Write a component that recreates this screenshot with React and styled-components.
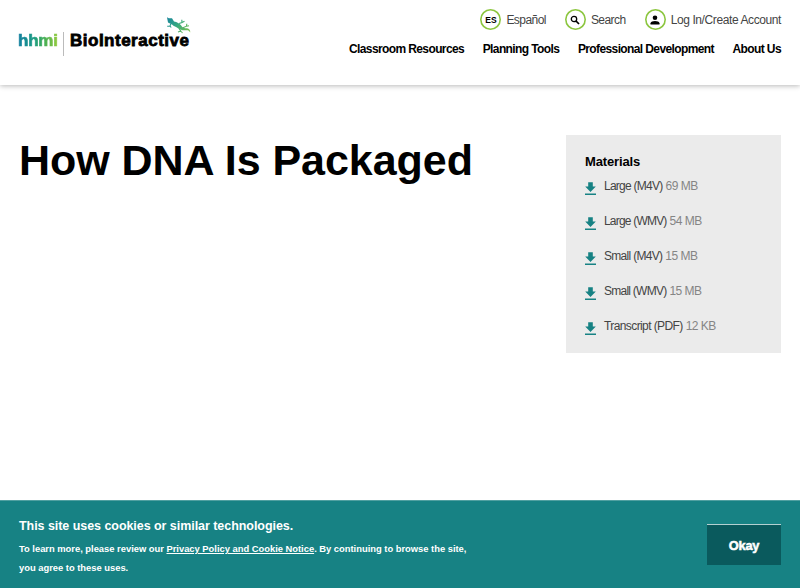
import styled, { createGlobalStyle } from 'styled-components';

const GlobalStyle = createGlobalStyle`
    * {
        box-sizing: border-box;
    }

    body {
        margin: 0;
        background: #fff;
        color: #000;
        font-family: 'Liberation Sans', Arial, sans-serif;
    }
`;

const Page = styled.div`
    display: flex;
    flex-direction: column;
    height: 588px;
    overflow: hidden;
`;

const Header = styled.header`
    display: flex;
    justify-content: space-between;
    height: 85px;
    padding: 0 19px 0 18px;
    flex: none;
    box-shadow: 0 1px 5px rgba(0, 0, 0, 0.28);
`;

const Logo = styled.a`
    position: relative;
    display: flex;
    align-items: flex-start;
    padding-top: 32px;
    font-size: 17px;
    line-height: 18px;
    font-weight: bold;
    white-space: nowrap;
`;

const Hhmi = styled.span`
    width: 40px;
    background: linear-gradient(90deg, #137fa0, #1d9c84 40%, #43ad55 65%, #95cc3d);
    background-clip: text;
    color: transparent;
    letter-spacing: -0.2px;
    -webkit-text-stroke: 0.7px transparent;
`;

const LogoRule = styled.span`
    width: 1px;
    height: 24px;
    margin: 0 6px 0 5px;
    background: #bbb;
`;

const LogoName = styled.span`
    letter-spacing: 0.5px;
    -webkit-text-stroke: 0.8px #000;
`;

// the lizard sits over the end of the word mark
const Lizard = styled.svg`
    position: absolute;
    left: 148px;
    top: 16px;
    width: 25px;
    height: 19px;
`;

const HeaderRight = styled.div`
    display: flex;
    flex-direction: column;
    align-items: flex-end;
    padding-top: 9px;
`;

const Utility = styled.div`
    display: flex;
    gap: 19px;
    height: 21px;
`;

const UtilityLink = styled.a`
    display: flex;
    align-items: center;
    gap: 5px;
    color: #444;
    font-size: 12px;
    letter-spacing: ${(props) => props.$spacing || '-0.4px'};
    white-space: nowrap;
`;

const Circle = styled.span`
    display: flex;
    align-items: center;
    justify-content: center;
    width: 21px;
    height: 21px;
    box-shadow: inset 0 0 0 1.6px #8cc63f;
    border-radius: 50%;
    color: #000;
    font-size: 8.5px;
    font-weight: bold;
    letter-spacing: 0;
`;

const Nav = styled.nav`
    display: flex;
    gap: 18.6px;
    margin-top: 12px;
`;

const NavLink = styled.a`
    font-size: 12px;
    line-height: 15px;
    font-weight: bold;
    letter-spacing: -0.61px;
    white-space: nowrap;
`;

const Main = styled.main`
    display: flex;
    flex: 1;
    justify-content: space-between;
    align-items: flex-start;
    padding: 50px 19px 0;
`;

const Title = styled.h1`
    margin: 0;
    font-size: 43px;
    line-height: 50px;
    letter-spacing: -0.05px;
    white-space: nowrap;
`;

const Materials = styled.aside`
    width: 215px;
    height: 218px;
    padding: 19px;
    background: #ebebeb;
`;

const MaterialsTitle = styled.h2`
    margin: 0;
    font-size: 13px;
    line-height: 16px;
    letter-spacing: -0.15px;
`;

const List = styled.ul`
    display: flex;
    flex-direction: column;
    gap: 20px;
    margin: 9px 0 0;
    padding: 0;
    list-style: none;
`;

const Item = styled.li`
    display: flex;
    height: 15px;
    color: #444;
    font-size: 12px;
    line-height: 15px;
    white-space: nowrap;
`;

const FileName = styled.span`
    letter-spacing: ${(props) => props.$spacing};
`;

const FileSize = styled.span`
    margin-left: 3px;
    color: #858585;
    letter-spacing: -0.5px;
`;

const DownloadIcon = styled.svg`
    flex: none;
    width: 11px;
    height: 14px;
    margin: 3px 8px 0 0;
    fill: #178284;
`;

const CookieBar = styled.footer`
    display: flex;
    flex: none;
    justify-content: space-between;
    align-items: flex-start;
    height: 88px;
    padding: 17px 19px 0;
    border-top: 1px solid #50a0a1;
    background: #178284;
    color: #fff;
`;

const CookieTitle = styled.h3`
    margin: 0 0 5px;
    font-size: 12.5px;
    line-height: 17px;
    letter-spacing: -0.05px;
`;

const CookieText = styled.p`
    margin: 0;
    width: 460px;
    font-size: 9.4px;
    line-height: 18.7px;
    font-weight: bold;
    letter-spacing: -0.01px;
`;

const CookieLink = styled.a`
    text-decoration: underline;
`;

const OkayButton = styled.button`
    width: 74px;
    height: 41px;
    margin-top: 6px;
    padding: 0;
    border: 0;
    border-top: 1px solid #b5d0d1;
    background: #0a5a5d;
    color: #fff;
    font-family: inherit;
    font-size: 12.8px;
    font-weight: bold;
    letter-spacing: -0.2px;
    -webkit-text-stroke: 0.5px #fff;
`;

const files = [
    { name: 'Large (M4V)', size: '69 MB', spacing: '-0.75px' },
    { name: 'Large (WMV)', size: '54 MB', spacing: '-0.8px' },
    { name: 'Small (M4V)', size: '15 MB', spacing: '-0.7px' },
    { name: 'Small (WMV)', size: '15 MB', spacing: '-0.75px' },
    { name: 'Transcript (PDF)', size: '12 KB', spacing: '-0.6px' },
];

const App = () => (
    <Page>
        <GlobalStyle />
        <Header>
            <Logo>
                <Hhmi>hhmi</Hhmi>
                <LogoRule />
                <LogoName>BioInteractive</LogoName>
                <Lizard viewBox="0 0 25 19">
                    <defs>
                        <linearGradient id="lizard" x1="0" y1="0" x2="25" y2="19" gradientUnits="userSpaceOnUse">
                            <stop offset="0" stopColor="#137fa0" />
                            <stop offset="0.45" stopColor="#35a880" />
                            <stop offset="1" stopColor="#8cc63f" />
                        </linearGradient>
                    </defs>
                    <path
                        d="M1 1.2L2.8 2.2L6 2.2L8 5.4C11 6.2 13.5 7 15 9.2C16.2 11.5 18.5 12.2 21 12.3C23.2 12.5 24.6 14.5 24.2 16.5C23.2 14.5 22 14 20 14.2C17 14.5 14 13.8 12 12.2C10 10.8 8 10.2 6 8.4L2 6.6Z"
                        fill="url(#lizard)"
                    />
                    <path
                        d="M5 7.5L4 10L1.2 10.2M4 10L5.2 11.5M13 12.5L14.8 15L12 16M14.8 15L16.5 17M13 7.5L16 6.6L15.8 3.8M16 6.6L18.5 5.2M17 11.8L20.5 10.2L20.8 7.8M20.5 10.2L23 9.8"
                        fill="none"
                        stroke="url(#lizard)"
                        strokeWidth="1.1"
                    />
                </Lizard>
            </Logo>
            <HeaderRight>
                <Utility>
                    <UtilityLink $spacing="-0.55px">
                        <Circle>ES</Circle>
                        Español
                    </UtilityLink>
                    <UtilityLink $spacing="-0.55px">
                        <Circle>
                            <svg width="10" height="10" viewBox="0 0 10 10" fill="none" stroke="#000">
                                <circle cx="4" cy="4" r="2.7" strokeWidth="1.3" />
                                <path d="M6 6L9 9" strokeWidth="1.7" />
                            </svg>
                        </Circle>
                        Search
                    </UtilityLink>
                    <UtilityLink>
                        <Circle>
                            <svg width="10" height="10" viewBox="0 0 10 10">
                                <circle cx="5" cy="2.7" r="2.3" />
                                <path d="M0.5 9.5V8.2C0.5 6.8 3 6 5 6S9.5 6.8 9.5 8.2V9.5Z" />
                            </svg>
                        </Circle>
                        Log In/Create Account
                    </UtilityLink>
                </Utility>
                <Nav>
                    <NavLink>Classroom Resources</NavLink>
                    <NavLink>Planning Tools</NavLink>
                    <NavLink>Professional Development</NavLink>
                    <NavLink>About Us</NavLink>
                </Nav>
            </HeaderRight>
        </Header>
        <Main>
            <Title>How DNA Is Packaged</Title>
            <Materials>
                <MaterialsTitle>Materials</MaterialsTitle>
                <List>
                    {files.map((file) => (
                        <Item key={file.name}>
                            <DownloadIcon viewBox="0 0 11 14">
                                <path d="M3.2 0.2H7.8V4.6H10.8L5.5 10L0.2 4.6H3.2ZM0 11.6H11V13.1H0Z" />
                            </DownloadIcon>
                            <FileName $spacing={file.spacing}>{file.name}</FileName>
                            <FileSize>{file.size}</FileSize>
                        </Item>
                    ))}
                </List>
            </Materials>
        </Main>
        <CookieBar>
            <div>
                <CookieTitle>This site uses cookies or similar technologies.</CookieTitle>
                <CookieText>
                    To learn more, please review our <CookieLink>Privacy Policy and Cookie Notice</CookieLink>. By
                    continuing to browse the site,
                    <br />
                    you agree to these uses.
                </CookieText>
            </div>
            <OkayButton>Okay</OkayButton>
        </CookieBar>
    </Page>
);

export default App;
